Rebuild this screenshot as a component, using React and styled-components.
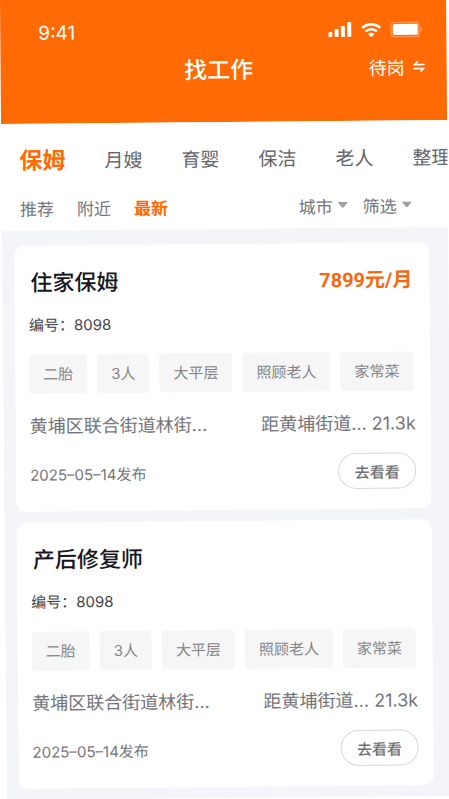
import React, { useState } from "react";
import styled, { createGlobalStyle } from "styled-components";

const GlobalStyle = createGlobalStyle`
  * { box-sizing: border-box; }
  body {
    margin: 0;
    background: #fff;
    font-family: Inter, "Noto Sans CJK SC", sans-serif;
    color: #757579;
  }
  button {
    margin: 0;
    padding: 0;
    border: 0;
    background: none;
    font: inherit;
    color: inherit;
    white-space: nowrap;
    cursor: pointer;
  }
`;

const Viewport = styled.div`
  min-height: 100vh;
  padding-right: 3px;
  overflow: hidden;
`;

/* The whole screen leans slightly, like a sheet laid on a desk. */
const Screen = styled.div`
  min-height: 100vh;
  background: #f4f5f8;
  transform: rotate(-0.5deg);
  transform-origin: 0 0;
`;

const Header = styled.header`
  height: 124px;
  padding-top: 20px;
  background: #ff6a04;
  color: #fff;
`;

const StatusBar = styled.div`
  display: flex;
  align-items: center;
  justify-content: space-between;
  height: 26px;
  padding: 0 24px 0 38px;
  font-size: 19px;
`;

const StatusIcons = styled.div`
  display: flex;
  align-items: center;
  gap: 9px;
`;

const TitleBar = styled.div`
  display: grid;
  grid-template-columns: 1fr auto 1fr;
  align-items: center;
  height: 48px;
  padding: 0 21px 0 11px;
`;

const PageTitle = styled.h1`
  grid-column: 2;
  margin: 0;
  font-size: 23px;
  font-weight: 500;
`;

const StatusSwitch = styled.button`
  display: flex;
  align-items: center;
  justify-self: end;
  gap: 8px;
  && { font-size: 18px; }
`;

const Controls = styled.div`
  height: 107px;
  padding-top: 15px;
  background: #fff;
`;

const Tabs = styled.nav`
  display: flex;
  align-items: center;
  gap: 39px;
  height: 40px;
  padding-left: 18px;
  overflow: hidden;
`;

const Tab = styled.button`
  flex: none;
  && {
    font-size: ${(p) => (p.$active ? 23 : 19)}px;
    font-weight: ${(p) => (p.$active ? 700 : 400)};
    color: ${(p) => (p.$active ? "#ff6a04" : "#65656a")};
  }
`;

const Filters = styled.div`
  display: flex;
  align-items: center;
  justify-content: space-between;
  height: 32px;
  margin-top: 13px;
  padding: 0 36px 0 18px;
`;

const FilterGroup = styled.div`
  display: flex;
  gap: ${(p) => p.$gap}px;
`;

const Filter = styled.button`
  display: flex;
  align-items: center;
  gap: 5px;
  && {
    font-size: 17px;
    font-weight: ${(p) => (p.$active ? 700 : 400)};
    color: ${(p) => (p.$active ? "#ff6a04" : "#757579")};
  }
`;

const JobList = styled.main`
  display: flex;
  flex-direction: column;
  gap: 11px;
  padding: 15px 19px 11px 12px;
`;

const Card = styled.article`
  padding: 19px 15px 20px 14px;
  border-radius: 10px;
  background: #fff;
`;

const Row = styled.div`
  display: flex;
  align-items: center;
  justify-content: space-between;
  height: ${(p) => p.$height}px;
  margin-top: 17px;
  white-space: nowrap;
`;

const CardHead = styled(Row)`
  margin-top: 0;
  padding: 0 2px;
`;

const JobTitle = styled.h2`
  margin: 0;
  font-size: 22px;
  font-weight: 500;
  color: #17171c;
`;

const Salary = styled.strong`
  font-family: Roboto, "Noto Sans CJK SC", sans-serif;
  font-size: 20px;
  font-weight: 700;
  color: #f5690f;
`;

const JobNumber = styled.p`
  margin: 17px 0;
  font-size: 15px;
  line-height: 24px;
  color: #424246;
`;

const Tags = styled.ul`
  display: flex;
  gap: 10px;
  margin: 0;
  padding: 0;
  list-style: none;
`;

const Tag = styled.li`
  padding: 1px 14px 0;
  border-radius: 4px;
  background: #f6f6f6;
  font-size: 15px;
  line-height: 38px;
  color: #858588;
  white-space: nowrap;
`;

const Place = styled.span`
  font-size: 18px;
`;

const Posted = styled.time`
  font-size: 15px;
`;

const ViewButton = styled.button`
  && {
    width: 78px;
    height: 36px;
    border: 1px solid #d9d9dc;
    border-radius: 18px;
    background: #fff;
    font-size: 15px;
    font-weight: 500;
    color: #707074;
  }
`;

const Signal = () => (
  <svg width="24" height="16" viewBox="0 0 24 16" fill="currentColor" aria-hidden="true">
    <rect x="0" y="10" width="4" height="5" rx="1" />
    <rect x="6.3" y="7" width="4" height="8" rx="1" />
    <rect x="12.6" y="4" width="4" height="11" rx="1" />
    <rect x="19" y="0" width="4" height="15" rx="1" />
  </svg>
);

const Wifi = () => (
  <svg width="20" height="15" viewBox="0 0 20 15" fill="none" stroke="currentColor" strokeWidth="2.6" aria-hidden="true">
    <path d="M1 5.2C6 .4 14 .4 19 5.2" />
    <path d="M4.3 8.7c3.2-3 8.2-3 11.4 0" />
    <path d="M10 14.5 6.8 11.2c1.8-1.6 4.6-1.6 6.4 0Z" fill="currentColor" stroke="none" />
  </svg>
);

const Battery = () => (
  <svg width="32" height="16" viewBox="0 0 32 16" fill="none" aria-hidden="true">
    <rect x=".7" y=".7" width="28" height="14.6" rx="3.5" stroke="#fff" strokeOpacity=".35" strokeWidth="1.2" />
    <rect x="2.5" y="2.5" width="25" height="11" rx="1.5" fill="#fff" />
    <path d="M30 5.5c1.8.8 1.8 4.2 0 5Z" fill="#fff" fillOpacity=".4" />
  </svg>
);

const SwapIcon = () => (
  <svg width="13" height="12" viewBox="0 0 13 12" fill="currentColor" aria-hidden="true">
    <path d="M.3 5 4.6.5l.9.8L4.3 3.4H12V5Z" />
    <path d="M12.7 7.4 8.4 11.9l-.9-.8L8.7 9H1V7.4Z" />
  </svg>
);

const Caret = () => (
  <svg width="10" height="6" viewBox="0 0 10 6" fill="#a0a0a3" aria-hidden="true">
    <path d="M.8 0h8.4c.6 0 .8.5.4.9L5.6 5.5c-.3.4-.9.4-1.2 0L.4.9C0 .5.2 0 .8 0Z" />
  </svg>
);

const categories = ["保姆", "月嫂", "育婴", "保洁", "老人", "整理"];
const orders = ["推荐", "附近", "最新"];
const menus = ["城市", "筛选"];
const tags = ["二胎", "3人", "大平层", "照顾老人", "家常菜"];

const jobs = [
  { title: "住家保姆", salary: "7899元/月" },
  { title: "产后修复师" },
].map((job) => ({
  ...job,
  number: "8098",
  tags,
  address: "黄埔区联合街道林街…",
  distance: "距黄埔街道… 21.3k",
  date: "2025–05–14",
}));

function JobCard({ job }) {
  return (
    <Card>
      <CardHead $height={32}>
        <JobTitle>{job.title}</JobTitle>
        {job.salary && <Salary>{job.salary}</Salary>}
      </CardHead>
      <JobNumber>编号：{job.number}</JobNumber>
      <Tags>
        {job.tags.map((tag) => (
          <Tag key={tag}>{tag}</Tag>
        ))}
      </Tags>
      <Row $height={28}>
        <Place>{job.address}</Place>
        <Place>{job.distance}</Place>
      </Row>
      <Row $height={36}>
        <Posted dateTime={job.date.replaceAll("–", "-")}>{job.date}发布</Posted>
        <ViewButton type="button">去看看</ViewButton>
      </Row>
    </Card>
  );
}

export default function App() {
  const [category, setCategory] = useState("保姆");
  const [order, setOrder] = useState("最新");

  return (
    <Viewport lang="zh-CN">
      <GlobalStyle />
      <Screen>
        <Header>
          <StatusBar>
            <span>9:41</span>
            <StatusIcons>
              <Signal />
              <Wifi />
              <Battery />
            </StatusIcons>
          </StatusBar>
          <TitleBar>
            <PageTitle>找工作</PageTitle>
            <StatusSwitch type="button">
              待岗
              <SwapIcon />
            </StatusSwitch>
          </TitleBar>
        </Header>
        <Controls>
          <Tabs>
            {categories.map((name) => (
              <Tab key={name} type="button" $active={name === category} onClick={() => setCategory(name)}>
                {name}
              </Tab>
            ))}
          </Tabs>
          <Filters>
            <FilterGroup $gap={23}>
              {orders.map((name) => (
                <Filter key={name} type="button" $active={name === order} onClick={() => setOrder(name)}>
                  {name}
                </Filter>
              ))}
            </FilterGroup>
            <FilterGroup $gap={15}>
              {menus.map((name) => (
                <Filter key={name} type="button">
                  {name}
                  <Caret />
                </Filter>
              ))}
            </FilterGroup>
          </Filters>
        </Controls>
        <JobList>
          {jobs.map((job) => (
            <JobCard key={job.title} job={job} />
          ))}
        </JobList>
      </Screen>
    </Viewport>
  );
}
